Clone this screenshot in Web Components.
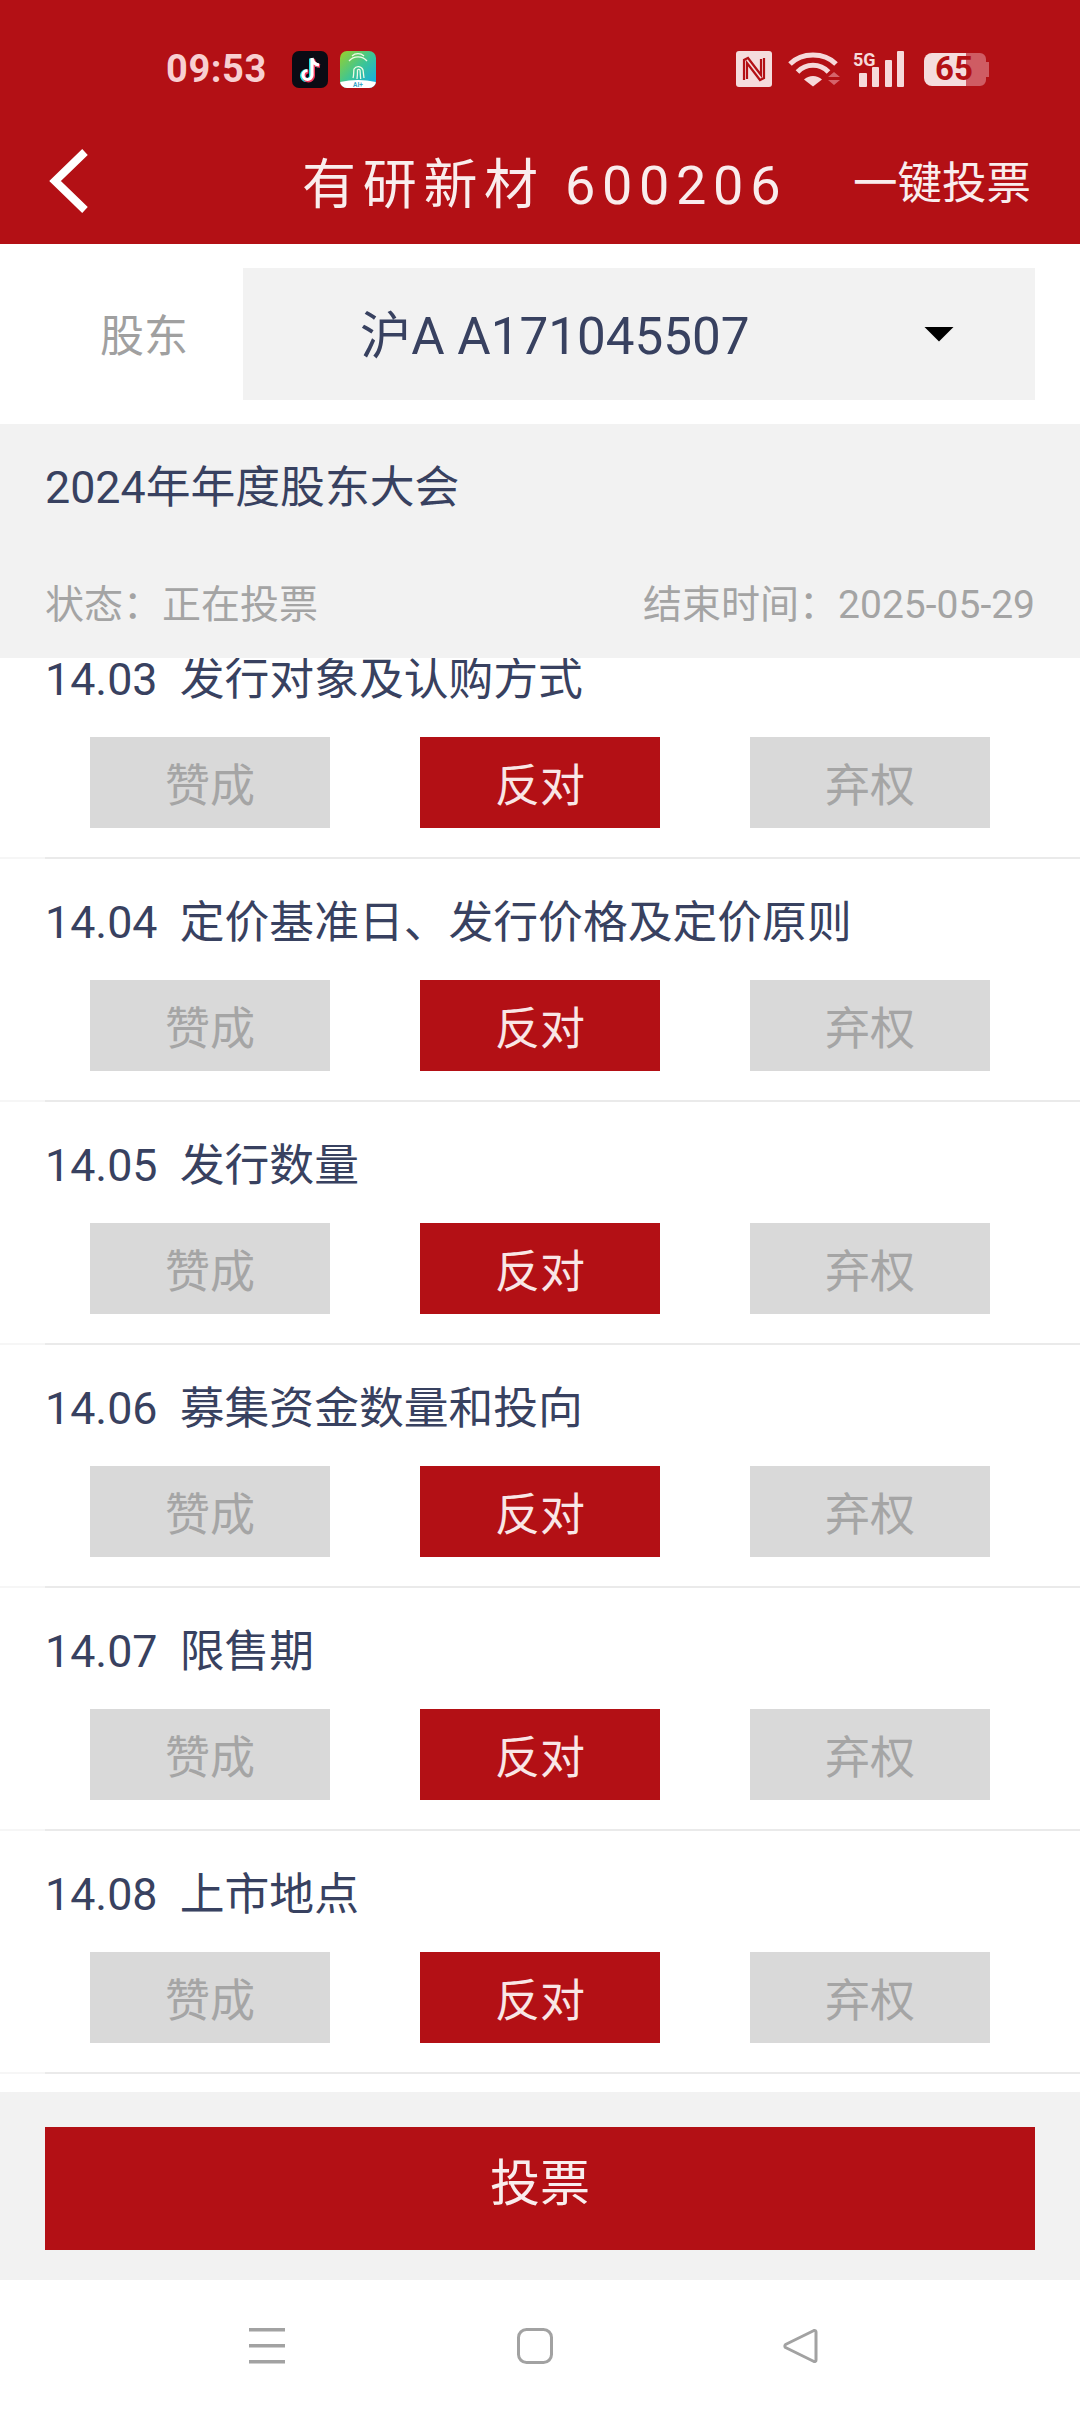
<!DOCTYPE html>
<html lang="zh"><head><meta charset="utf-8">
<style>
html,body{margin:0;padding:0;background:#fff}
body{width:1080px;height:2412px;overflow:hidden;font-family:Roboto,"Noto Sans CJK SC",sans-serif}
</style></head><body>
<vote-app>
  <status-bar slot="status"></status-bar>
  <nav-header slot="nav" action="一键投票">有研新材 600206</nav-header>
  <holder-select slot="select" label="股东">沪A A171045507</holder-select>
  <meeting-info slot="info" status="状态：正在投票" end="结束时间：2025-05-29">2024年年度股东大会</meeting-info>
  <vote-item>14.03  发行对象及认购方式</vote-item>
  <vote-item>14.04  定价基准日、发行价格及定价原则</vote-item>
  <vote-item>14.05  发行数量</vote-item>
  <vote-item>14.06  募集资金数量和投向</vote-item>
  <vote-item>14.07  限售期</vote-item>
  <vote-item>14.08  上市地点</vote-item>
  <submit-bar slot="submit">投票</submit-bar>
  <system-nav slot="sysnav"></system-nav>
</vote-app>
<script>
function def(name,html){
  customElements.define(name,class extends HTMLElement{
    connectedCallback(){
      if(this.shadowRoot)return;
      const r=this.attachShadow({mode:'open'});
      r.innerHTML=typeof html==='function'?html(this):html;
    }
  });
}
const RED='#b31015';
const INK='#384160';
def('vote-app',`<style>
:host{display:flex;flex-direction:column;width:1080px;height:2412px;background:#fff;color:${INK}}
.list{height:1434px;overflow:hidden;flex:none}
.scroll{margin-top:-42px;display:flex;flex-direction:column}
</style>
<slot name="status"></slot><slot name="nav"></slot><slot name="select"></slot><slot name="info"></slot>
<div class="list"><div class="scroll"><slot></slot></div></div>
<slot name="submit"></slot><slot name="sysnav"></slot>`);
def('status-bar',`<style>
:host{display:flex;align-items:flex-start;height:100px;box-sizing:border-box;background:${RED};padding:51px 0 0 166px}
.time{font:700 38px/36px Roboto,sans-serif;color:#f8cfd1;letter-spacing:.6px;width:126px;margin-top:0}
svg{display:block;flex:none;overflow:visible}
.r{margin-left:360px}
.ic{margin-left:12px}
.bat{position:relative;width:66px;height:36px;margin-left:17px;flex:none}
.bat span{position:absolute;left:11px;top:1px;font:700 33px/34px Roboto,sans-serif;color:${RED}}
</style>
<div class="time">09:53</div>
<svg width="36" height="37" viewBox="0 0 36 37"><rect width="36" height="37" rx="7" fill="#0b0b14"/>
<path d="M20 7v17a4.500 4.500 0 1 1-4.500-4.500M20 7c.5 4 3 6.500 7 7" fill="none" stroke="#25e4e6" stroke-width="4" transform="translate(-1 .6)"/>
<path d="M20 7v17a4.500 4.500 0 1 1-4.500-4.500M20 7c.5 4 3 6.500 7 7" fill="none" stroke="#f33a5e" stroke-width="4" transform="translate(1 1)"/>
<path d="M20 7v17a4.500 4.500 0 1 1-4.500-4.500M20 7c.5 4 3 6.500 7 7" fill="none" stroke="#fff" stroke-width="3.200"/></svg>
<svg class="ic" width="36" height="37" viewBox="0 0 36 37"><defs><linearGradient id="g" x1="0" y1="0" x2="1" y2="1"><stop offset="0" stop-color="#9ad02a"/><stop offset=".5" stop-color="#3cc596"/><stop offset="1" stop-color="#0fa8f0"/></linearGradient><clipPath id="ci"><rect width="36" height="37" rx="7"/></clipPath></defs><rect width="36" height="37" rx="7" fill="url(#g)"/>
<g fill="none" stroke="#eefbe6" stroke-width="1.300"><path d="M12 5a9 9 0 0 1 12 0"/><path d="M9 10a12 12 0 0 1 18 0"/><path d="M13 27c1-3 .5-6 1-9a5 5 0 0 1 9 1c.5 3 .5 5 1 8"/><path d="M17 28c.5-3 .5-6 .5-9a1.500 1.500 0 0 1 2.500 0c.3 3 .3 6 .7 9"/></g>
<path d="M0 31q18-4 36 0v6H0z" fill="#fff" clip-path="url(#ci)"/><text x="18" y="36" text-anchor="middle" font-family="Roboto,sans-serif" font-weight="700" font-size="6.500" fill="#3aa6c8">AI+</text></svg>
<svg class="r" width="36" height="36" viewBox="0 0 36 36"><rect width="36" height="36" rx="3" fill="#f5dcdd"/><path d="M8 29V9l4-2 13 17V8M28 7v20l-4 2L11 12v16" fill="none" stroke="${RED}" stroke-width="2.200"/></svg>
<svg style="margin-left:16px" width="52" height="36" viewBox="0 0 52 36"><g fill="none" stroke="#f6d9da" stroke-width="5"><path d="M2 13C14 1 36 1 48 13"/><path d="M9.500 21C18 12 32 12 40.500 21"/></g><path d="M16 28.500a13 13 0 0 1 18 0l-9 7z" fill="#f6d9da"/><path d="M40 26l6-5 6 5zM40 29h12l-6 5z" fill="#d5636a"/></svg>
<svg style="margin-left:13px" width="54" height="36" viewBox="0 0 54 36"><text x="0" y="15" font-family="Roboto,sans-serif" font-weight="700" font-size="18" fill="#f6d9da">5G</text><g fill="#f6d9da"><rect x="6" y="22" width="8" height="14" rx="1"/><rect x="19" y="16" width="7" height="20" rx="1"/><rect x="32" y="9" width="7" height="27" rx="1"/><rect x="44" y="0" width="7" height="36" rx="1"/></g></svg>
<div class="bat"><svg width="66" height="36" viewBox="0 0 66 36"><path d="M8 2h34v33H8a8 8 0 0 1-8-8V10a8 8 0 0 1 8-8z" fill="#f5dcdd"/><path d="M42 2h14a6 6 0 0 1 6 6v3h3v15h-3v3a6 6 0 0 1-6 6H42z" fill="#cf5c63"/></svg><span>65</span></div>`);
def('nav-header',t=>`<style>
:host{display:flex;align-items:center;height:144px;background:${RED};color:#f9eded;padding:0 49px 0 48px;box-sizing:border-box}
svg{flex:none;margin-top:18px}
.t{flex:1;font-size:54px;letter-spacing:6.700px;line-height:76px;white-space:pre;padding-left:212px;margin-top:28px}
.a{font-size:44.500px;line-height:60px;white-space:nowrap;margin-top:24px}
</style>
<svg width="42" height="66" viewBox="0 0 42 66"><path d="M37 4 7 33l30 29" fill="none" stroke="#fff" stroke-width="8"/></svg>
<div class="t"><slot></slot></div><div class="a">${t.getAttribute('action')}</div>`);
def('holder-select',t=>`<style>
:host{display:flex;height:180px;box-sizing:border-box;padding:24px 45px 24px 0;background:#fff}
.l{width:243px;box-sizing:border-box;padding-left:100px;font-size:44px;line-height:138px;color:#a0a0a0;flex:none}
.b{flex:1;background:#f2f2f2;display:flex;align-items:center;font-size:51.200px;color:${INK}}
.v{flex:1;padding:6px 0 0 117px;line-height:126px}
.c{width:30px;height:15px;margin-right:81px;flex:none;background:#000;clip-path:polygon(0 0,100% 0,50% 100%)}
</style><div class="l">${t.getAttribute('label')}</div><div class="b"><div class="v"><slot></slot></div><div class="c"></div></div>`);
def('meeting-info',t=>`<style>
:host{display:block;height:234px;box-sizing:border-box;background:#f2f2f2;padding:33px 45px 0;color:${INK}}
.t{font-size:44.800px;line-height:62px}
.m{display:flex;justify-content:space-between;margin-top:58px;font-size:39px;line-height:56px;color:#a4a4a4}
</style><div class="t"><slot></slot></div><div class="m"><span>${t.getAttribute('status')}</span><span>${t.getAttribute('end')}</span></div>`);
def('vote-item',`<style>
:host{display:block;height:243px;box-sizing:border-box;background:#fff;position:relative}
.t{padding:33px 0 0 45px;font-size:44.800px;line-height:62px;white-space:pre;color:${INK}}
.r{display:grid;grid-template-columns:240px 240px 240px;column-gap:90px;padding:26px 0 0 90px}
.b{height:91px;line-height:99px;text-align:center;font-size:45px;background:#d9d9d9;color:#a5a5a5}
.b.on{background:${RED};color:#f9e6e6}
.d{height:2px;position:absolute;left:0;right:0;bottom:0;background:linear-gradient(90deg,#f6f6f6 45px,#eaeaea 45px)}
</style><div class="t"><slot></slot></div><div class="r"><div class="b">赞成</div><div class="b on">反对</div><div class="b">弃权</div></div><div class="d"></div>`);
def('submit-bar',`<style>
:host{display:block;height:188px;box-sizing:border-box;background:#f2f2f2;padding:35px 45px 30px}
.b{height:123px;line-height:114px;background:${RED};color:#f9eded;text-align:center;font-size:50px}
</style><div class="b"><slot></slot></div>`);
def('system-nav',`<style>
:host{display:flex;height:132px;box-sizing:border-box;background:#fff;padding:48px 0 0 249px;align-items:flex-start}
svg{display:block;flex:none}
</style>
<svg width="36" height="36" viewBox="0 0 36 36"><g fill="#a2a2a2"><rect y="0" width="36" height="3.500"/><rect y="16" width="36" height="3.500"/><rect y="32" width="36" height="3.500"/></g></svg>
<svg style="margin-left:232px" width="36" height="36" viewBox="0 0 36 36"><rect x="1.500" y="1.500" width="33" height="33" rx="8" fill="none" stroke="#a2a2a2" stroke-width="3"/></svg>
<svg style="margin-left:229px" width="36" height="36" viewBox="0 0 36 36"><path d="M32 2.500 3.500 16.500a2 2 0 0 0 0 3L32 33.500a1.500 1.500 0 0 0 2-1.500V4a1.500 1.500 0 0 0-2-1.500z" fill="none" stroke="#a2a2a2" stroke-width="3" stroke-linejoin="round"/></svg>`);
</script>
</body></html>
